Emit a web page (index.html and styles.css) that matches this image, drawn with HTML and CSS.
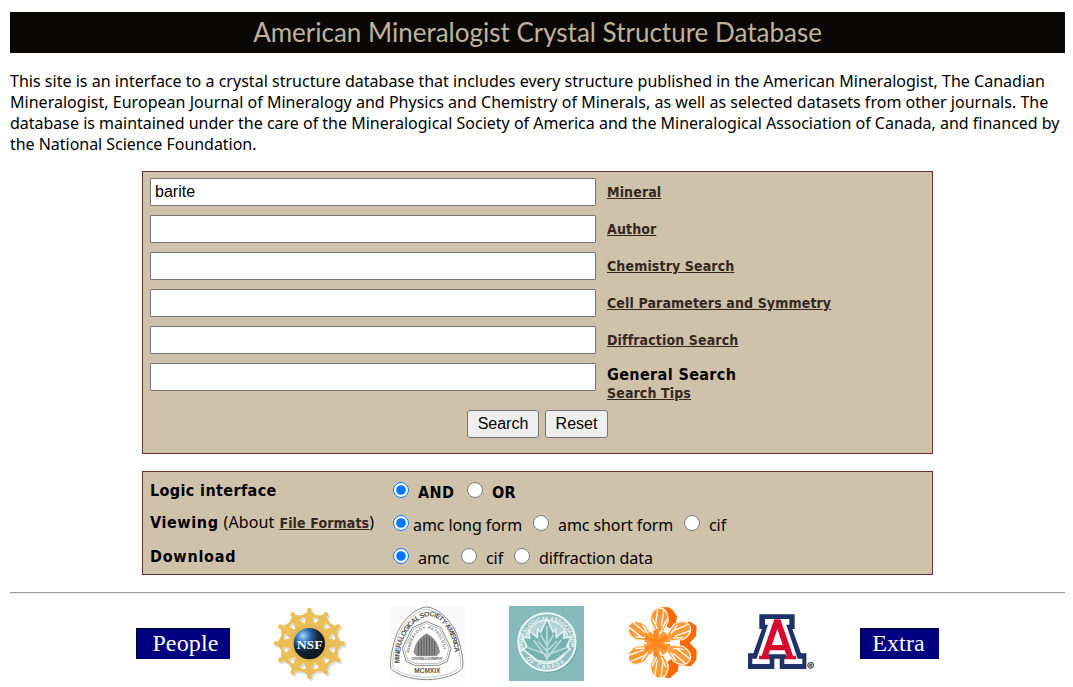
FILE: index.html
```html
<!DOCTYPE html>
<html lang="en">
<head>
<meta charset="utf-8">
<title>American Mineralogist Crystal Structure Database</title>
<link rel="stylesheet" href="styles.css">
</head>
<body>
<header class="banner"><span class="banner-text">American Mineralogist Crystal Structure Database</span></header>
<p class="intro">
  <span class="l1">This site is an interface to a crystal structure database that includes every structure published in the American Mineralogist, The Canadian</span>
  <span class="l2">Mineralogist, European Journal of Mineralogy and Physics and Chemistry of Minerals, as well as selected datasets from other journals. The</span>
  <span class="l3">database is maintained under the care of the Mineralogical Society of America and the Mineralogical Association of Canada, and financed by</span>
  <span class="l4">the National Science Foundation.</span>
</p>
<form>
  <section class="panel search">
    <div class="row"><input class="field" type="text" value="barite"><a href="#">Mineral</a></div>
    <div class="row"><input class="field" type="text"><a href="#">Author</a></div>
    <div class="row"><input class="field" type="text"><a href="#">Chemistry Search</a></div>
    <div class="row"><input class="field" type="text"><a href="#">Cell Parameters and Symmetry</a></div>
    <div class="row"><input class="field" type="text"><a href="#">Diffraction Search</a></div>
    <div class="row"><input class="field" type="text"><div class="general"><b>General Search</b><a href="#">Search Tips</a></div></div>
    <div class="buttons"><button type="button" class="b-search">Search</button><button type="reset" class="b-reset">Reset</button></div>
  </section>
  <section class="panel options">
    <div class="opt"><div class="name"><b>Logic interface</b></div>
      <input type="radio" name="logic" checked><b class="t and">AND</b><input type="radio" name="logic"><b class="t">OR</b></div>
    <div class="opt"><div class="name about"><b>Viewing</b> (About <a href="#">File Formats</a>)</div>
      <input type="radio" name="view" checked><span class="t long">amc long form</span><input type="radio" name="view"><span class="t short">amc short form</span><input type="radio" name="view"><span class="t">cif</span></div>
    <div class="opt"><div class="name"><b class="download">Download</b></div>
      <input type="radio" name="down" checked><span class="t amc">amc</span><input type="radio" name="down"><span class="t cif">cif</span><input type="radio" name="down"><span class="t data">diffraction data</span></div>
  </section>
</form>
<hr>
<footer class="logos">
  <a class="tag people">People</a>
  <svg class="logo nsf" viewBox="24 18 225 225">
    <defs>
      <radialGradient id="globe" cx=".3" cy=".25" r=".7"><stop offset="0" stop-color="#a5d8ff"/><stop offset=".35" stop-color="#2467ae"/><stop offset=".7" stop-color="#17252f"/><stop offset="1" stop-color="#101820"/></radialGradient>
      <path id="person" d="M133 23a7 7 0 0 1 5 12l20 13-1 5-14 0 5 18 16 20h-19l-12-12-12 12h-19l16-20 5-18-14 0-1-5 20-13a7 7 0 0 1 5-12z"/>
      <g id="people"><use href="#person"/><use href="#person" transform="rotate(30 133 130)"/><use href="#person" transform="rotate(60 133 130)"/><use href="#person" transform="rotate(90 133 130)"/><use href="#person" transform="rotate(120 133 130)"/><use href="#person" transform="rotate(150 133 130)"/><use href="#person" transform="rotate(180 133 130)"/><use href="#person" transform="rotate(210 133 130)"/><use href="#person" transform="rotate(240 133 130)"/><use href="#person" transform="rotate(270 133 130)"/><use href="#person" transform="rotate(300 133 130)"/><use href="#person" transform="rotate(330 133 130)"/></g>
    </defs>
    <use href="#people" transform="translate(5 6)" fill="#c8c8c8" opacity=".6"/>
    <use href="#people" fill="#eabf58"/>
    <circle cx="133" cy="130" r="52" fill="none" stroke="#e5b850" stroke-width="10"/>
    <circle cx="133" cy="131" r="47" fill="url(#globe)"/>
    <text class="nsf-text" x="134" y="146" textLength="78" lengthAdjust="spacingAndGlyphs">NSF</text>
  </svg>
  <svg class="logo msa" viewBox="18 18 225 225">
    <rect x="18" y="18" width="225" height="225" fill="#fafafa"/>
    <g fill="none" stroke="#888" stroke-width="3">
      <path d="M128 21C165 24 208 67 221 112 233 150 240 188 235 205 222 223 174 239 128 239S34 223 21 205C16 188 23 150 35 112 48 67 91 24 128 21Z" fill="#fff"/>
      <path d="M128 28C162 31 202 72 215 114 226 150 233 184 229 201 216 217 172 232 128 232S40 217 27 201C23 184 30 150 41 114 54 72 94 31 128 28Z" stroke="#aaa" stroke-width="2"/>
      <path d="M128 64 171 83 201 145 190 184 164 196H92L66 184 55 145 85 83Z"/>
      <path d="M128 70 167 87 195 145 185 180 162 190H94L71 180 61 145 89 87Z" stroke="#999" stroke-width="2"/>
      <path d="M128 102C145 109 162 128 166 157L158 167H98L90 157C94 128 111 109 128 102Z" fill="#929292"/>
      <path d="M104 126v38M112 118v47M120 112v54M128 107v60M136 110v56M144 116v49M152 124v40" stroke="#555"/>
    </g>
    <path id="arch" d="M47 190C43 142 63 91 98 64 138 37 160 49 181 76 210 112 216 158 212 197" fill="none"/>
    <text class="seal-text"><textPath href="#arch" textLength="326">MINERALOGICAL SOCIETY·AMERICA</textPath></text>
    <path id="inner" d="M76 158 C80 125 95 90 128 86 C161 90 176 125 181 160" fill="none"/>
    <text class="seal-small"><textPath href="#inner" textLength="184">MINERALOGY·PETROLOGY</textPath></text>
    <text class="seal-small" x="81" y="181" textLength="95">CRYSTALLOGRAPHY</text>
    <text class="seal-text" x="91" y="219" textLength="78" lengthAdjust="spacingAndGlyphs">MCMXIX</text>
  </svg>
  <svg class="logo mac" viewBox="27 18 225 225">
    <rect x="27" y="18" width="225" height="225" fill="#87baba"/>
    <circle cx="144" cy="130" r="88" fill="#6f9fa0"/>
    <circle cx="141" cy="126" r="86" fill="#8fbfc0" stroke="#eef7f7" stroke-width="6"/>
    <circle cx="141" cy="126" r="65" fill="#b4d3d9" stroke="#e6f2f2" stroke-width="4"/>
    <path d="m141 56 18 40 9-8 1 24 24-20-2 22 22-3-13 29 10 8-43 34-26 4-28-4-44-34 12-8-14-29 22 3-2-22 25 20 1-24 9 8Z" fill="#77b2b1" stroke="#e1f1f1" stroke-width="5"/>
    <path d="M141 78v108M141 175l-40-55M141 175l42-55M141 164 84 143M141 164l58-21M122 104l19 33 20-33M113 123l28 31 30-31" fill="none" stroke="#b9dada" stroke-width="5"/>
    <path id="mac-top" d="M72 153A72 72 0 1 1 210 153" fill="none"/>
    <text class="mac-text"><textPath href="#mac-top" textLength="255" lengthAdjust="spacingAndGlyphs">MINERALOGICAL ASSOCIATION</textPath></text>
    <path id="mac-bottom" d="M78 176A81 81 0 0 0 204 176" fill="none"/>
    <text class="mac-text"><textPath href="#mac-bottom" textLength="130">OF CANADA</textPath></text>
  </svg>
  <svg class="logo flake" viewBox="27 18 225 225">
    <defs><g id="petal"><path d="M80 62C82 34 92 24 107 24 122 24 132 34 134 62L118 97H96Z"/><path d="M95 78 102 28M113 78l8-48M87 56l14 30M129 58l-14 28" fill="none" stroke="#fff" stroke-width="4"/></g>
    </defs>
    <path d="M120 22H146L158 30 172 50 167 67 211 65 230 79 228 109 209 129 230 151 229 179 213 199 176 195 173 214 149 235 126 231 135 190 180 160V100L140 80Z" fill="#ff6900"/>
    <g fill="#ff9933" stroke="#fff0dd" stroke-width="4" transform="translate(11 0)"><use href="#petal"/><use href="#petal" transform="rotate(60 107 129)"/><use href="#petal" transform="rotate(120 107 129)"/><use href="#petal" transform="rotate(180 107 129)"/><use href="#petal" transform="rotate(240 107 129)"/><use href="#petal" transform="rotate(300 107 129)"/></g>
    <circle cx="112" cy="129" r="39" fill="#ff9933"/>
    <path d="M58 129h23M133 129h28M94 90l7 13M94 168l7-13M126 90l-7 13M126 168l-7-13" stroke="#fff" stroke-width="5"/>
    <path d="M107 92v78M76 112l64 36M76 148l64-36" stroke="#ff861c" stroke-width="12"/>
  </svg>
  <svg class="logo ua" viewBox="24 18 225 225">
    <path d="M58 43H164V87H157L183 160H199V207H119V176H103V207H24V160H40L66 87H58Z" fill="#1e3268"/>
    <path d="M75 57H148V74H139L173 176H187V192H133V177H142L137 163H85L80 177H89V192H37V176H50L84 74H75Z" fill="#fff"/>
    <path d="M103 58H121L159 167H168V178H136V167H140L134 151H90L84 167H89V178H57V167H65ZM112 87 96 135H128Z" fill="#d8092f" fill-rule="evenodd"/>
    <circle cx="212" cy="196" r="9" fill="#bbb" stroke="#444" stroke-width="3"/>
    <text class="registered" x="208" y="200">R</text>
  </svg>
  <a class="tag extra">Extra</a>
</footer>
</body>
</html>
```
FILE: styles.css
```css
* { box-sizing: border-box; }
body {
  margin: 0;
  padding: 12px 8px 0 10px;
  background: #fff;
  color: #000;
  font: 16px/21px "Noto Sans", sans-serif;
  overflow: hidden;
}
b, a { font-family: "DejaVu Sans Condensed", "DejaVu Sans", sans-serif; letter-spacing: 0.38px; }
.banner {
  height: 41px;
  display: flex;
  justify-content: center;
  align-items: center;
  background: #0a0806;
  color: #bfb39d;
  font: 26px/41px Lato, sans-serif;
  white-space: nowrap;
}
.intro { margin: 18px 0 16px; white-space: nowrap; }
.intro span { display: table; }
.l1, .l2 { letter-spacing: 0.022px; }
.l3 { letter-spacing: -0.008px; }
.l4 { letter-spacing: -0.03px; }
.panel {
  width: 791px;
  margin: 0 auto 0 132px;
  background: #cfc2ab;
  border: 1px solid #663333;
}
a { color: #33271e; font-size: 14px; font-weight: bold; text-decoration: underline; letter-spacing: 0.13px; }
.search { height: 283px; padding: 6px 7px; }
.row { display: flex; height: 37px; gap: 11px; white-space: nowrap; }
.row > a { line-height: 28px; height: 28px; }
.field {
  width: 446px;
  height: 28px;
  padding: 0 4px 1px;
  border: 1px solid #767676;
  border-radius: 1px;
  font: 16px "Liberation Sans", sans-serif;
}
.general { display: flex; flex-direction: column; }
.general b { line-height: 23px; }
.general a { line-height: 15px; }
.buttons { display: flex; justify-content: center; gap: 6px; padding-top: 10px; }
button {
  height: 28px;
  padding: 0 0 1px;
  border: 1px solid #767676;
  border-radius: 3px;
  background: #efefef;
  color: #000;
  font: 16px "Liberation Sans", sans-serif;
}
.b-search { width: 72px; }
.b-reset { width: 63px; }
.options { height: 104px; margin-top: 17px; padding: 1px 7px; }
.opt { display: flex; height: 33px; align-items: center; white-space: nowrap; }
.name { width: 243px; padding-top: 1px; }
.about b { letter-spacing: 0.6px; }
.about { letter-spacing: 0.12px; word-spacing: 0.7px; }
.about a { word-spacing: 0; }
.download { letter-spacing: 0.75px; }
input[type="radio"] { width: 16px; height: 16px; margin: 0; }
.t { padding: 5px 0 0 9px; }
span.t { letter-spacing: -0.08px; }
.and { width: 58px; }
.long { width: 124px; padding-left: 4px; }
.short { width: 135px; }
.amc { width: 52px; }
.cif { width: 37px; }
hr { margin: 17px 0 0; height: 2px; border: 0; border-top: 1px solid #9a9a9a; border-bottom: 1px solid #eee; }
.logos { display: flex; height: 75px; margin-top: 12px; padding-left: 126px; align-items: center; }
.logo { width: 75px; height: 75px; flex: none; }
.tag {
  height: 31px;
  background: #000080;
  border-top: 1px solid #000030;
  border-left: 1px solid #000030;
  color: #fff;
  font: 24px/28px "Liberation Serif", serif;
  letter-spacing: 0.15px;
  text-align: center;
  text-decoration: none;
}
.people { width: 94px; padding-left: 4px; }
.extra { width: 79px; margin-left: 37px; padding-right: 3px; }
.nsf { margin-left: 43px; }
.msa { margin-left: 42px; }
.mac { margin-left: 44px; }
.flake { margin-left: 45px; }
.ua { margin-left: 44px; }
.nsf-text { font: bold 38px "Liberation Serif", serif; fill: #fff; text-anchor: middle; }
.seal-text { font: bold 21px "Liberation Sans", sans-serif; fill: #555; }
.seal-small { font: bold 12px "Liberation Sans", sans-serif; fill: #777; }
.mac-text { font: bold 17px "Liberation Sans", sans-serif; fill: #f1f8f8; }
.registered { font: bold 11px "Liberation Sans", sans-serif; fill: #333; }
```
